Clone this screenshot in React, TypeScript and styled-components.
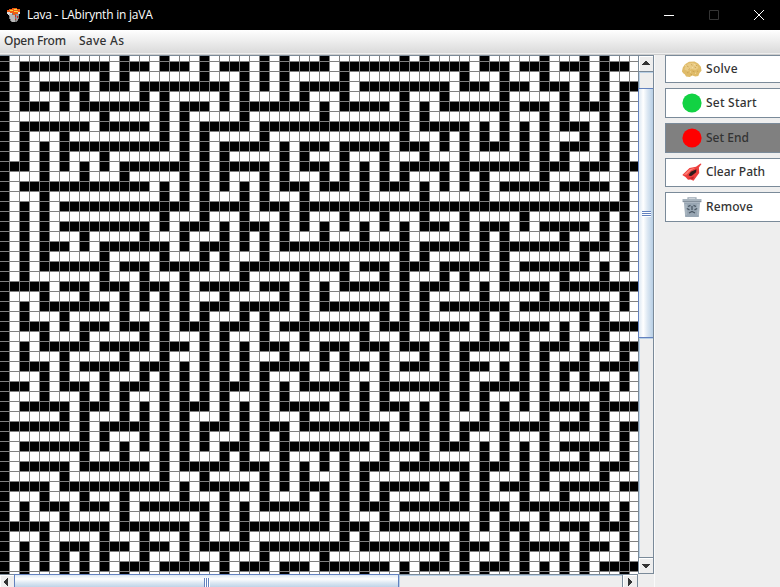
import React from "react";
import styled, { createGlobalStyle, css } from "styled-components";

const GlobalStyle = createGlobalStyle`
  * { box-sizing: border-box; }
  body { margin: 0; background: #eeeeee; overflow: hidden; }
`;

const LINE = "#7a8a99";
const THUMB = "#6382bf";
const FACE = "#eeeeee";

const Window = styled.div`
  width: 780px;
  height: 587px;
  display: flex;
  flex-direction: column;
  overflow: hidden;
  background: ${FACE};
  font-family: "Noto Sans", "Open Sans", sans-serif;
`;

const TitleBar = styled.header`
  flex: none;
  height: 30px;
  display: flex;
  align-items: center;
  padding-left: 6px;
  background: #000;
  color: #fff;
`;

const Title = styled.span`
  flex: 1;
  margin-left: 5px;
  font: 12px/16px "Open Sans", sans-serif;
  letter-spacing: -0.22px;
  white-space: pre;
`;

const WindowButtons = styled.div`
  display: flex;
  margin-right: -2px;
`;

const WindowButton = styled.span<{ $width: number; $dim?: boolean }>`
  width: ${(p) => p.$width}px;
  height: 30px;
  display: flex;
  align-items: center;
  justify-content: center;
  color: ${(p) => (p.$dim ? "#343434" : "#fff")};
`;

const MenuBar = styled.nav`
  flex: none;
  height: 25px;
  display: flex;
  padding-left: 4px;
  gap: 13px;
  background: linear-gradient(#fff, #dadada 23px, #eee 23px, #eee 24px, #ccc 24px);
`;

const MenuItem = styled.span<{ $width: number; $tracking: number }>`
  width: ${(p) => p.$width}px;
  font-size: 12px;
  font-weight: 500;
  line-height: 22px;
  letter-spacing: ${(p) => p.$tracking}px;
  color: #333;
  white-space: pre;
`;

const Content = styled.main`
  flex: 1;
  min-height: 0;
  display: flex;
`;

const ScrollPane = styled.section`
  flex: none;
  width: 654px;
  height: 532px;
  display: grid;
  grid-template-columns: 638px 16px;
  grid-template-rows: 518px 14px;
  border-top: 1px solid ${LINE};
  overflow: hidden;
`;

const Viewport = styled.div`
  overflow: hidden;
  display: flex;
  flex-direction: column;
  background: #fff;
`;

const MazeRow = styled.div<{ $height: number }>`
  flex: none;
  height: ${(p) => p.$height}px;
  width: 640px;
  display: flex;
  border-bottom: 1px solid #808080;
`;

const Cell = styled.i<{ $wall: boolean }>`
  flex: none;
  width: 10px;
  background: ${(p) => (p.$wall ? "#000" : "#fff")};
  border-right: 1px solid #808080;
`;

const VBar = styled.div`
  display: flex;
  flex-direction: column;
  border-left: 1px solid ${LINE};
  border-right: 1px solid ${LINE};
  border-bottom: 1px solid ${LINE};
`;

const HBar = styled.div`
  display: flex;
  height: 14px;
  border-top: 1px solid ${LINE};
  border-right: 1px solid ${LINE};
`;

const Corner = styled.div`
  background: ${FACE};
`;

const arrowBase = css`
  flex: none;
  display: flex;
  align-items: center;
  justify-content: center;
  background: ${FACE};
  box-shadow: inset 1px 1px 0 #fff;
`;

const ArrowUp = styled.div`
  ${arrowBase}
  height: 16px;
  padding-bottom: 1px;
  border-bottom: 1px solid ${LINE};
`;

const ArrowDown = styled.div`
  ${arrowBase}
  height: 16px;
  border-top: 1px solid ${LINE};
`;

const ArrowLeft = styled.div`
  ${arrowBase}
  width: 14px;
  padding-right: 2px;
`;

const ArrowRight = styled.div`
  ${arrowBase}
  width: 15px;
  border-left: 1px solid ${LINE};
`;

const VTrack = styled.div<{ $size?: number }>`
  ${(p) => (p.$size ? `flex: none; height: ${p.$size}px;` : "flex: 1;")}
  background: ${FACE};
  box-shadow: inset 1px 1px 0 #b8cfe5;
`;

const HTrack = styled.div`
  flex: 1;
  background: ${FACE};
  box-shadow: inset 1px 1px 0 #b8cfe5;
`;

const VThumb = styled.div`
  flex: none;
  height: 250px;
  margin-left: -1px;
  padding-top: 2px;
  display: flex;
  flex-direction: column;
  align-items: center;
  justify-content: center;
  border: 1px solid ${THUMB};
  border-right: 0;
  background: linear-gradient(90deg, #dde8f3, #fff 30%, #dde8f3 60%, #b8cfe5);
`;

const HThumb = styled.div`
  flex: none;
  width: 385px;
  height: 15px;
  margin-top: -1px;
  display: flex;
  justify-content: center;
  padding-top: 3px;
  border: 1px solid ${THUMB};
  background: linear-gradient(#dde8f3, #fff 30%, #dde8f3 60%, #b8cfe5);
`;

const VGrip = styled.span`
  width: 9px;
  height: 2px;
  background: linear-gradient(${THUMB} 50%, #fff 50%);
`;

const HGrip = styled.span`
  width: 2px;
  height: 11px;
  background: linear-gradient(90deg, ${THUMB} 50%, #fff 50%);
`;

const Sidebar = styled.aside`
  flex: 1;
  padding-left: 10px;
  display: flex;
  flex-direction: column;
  gap: 5px;
  border-left: 1px solid #fafafa;
`;

const ToolButton = styled.button<{ $height: number; $tracking: number; $active?: boolean }>`
  flex: none;
  width: 125px;
  height: ${(p) => p.$height}px;
  margin: 0;
  padding: 0 0 0 16px;
  display: flex;
  align-items: center;
  gap: 4px;
  border: 1px solid ${LINE};
  border-right: 0;
  background: ${(p) => (p.$active ? "#808080" : "#fff")};
  color: #333;
  font: 500 12px/16px "Noto Sans", sans-serif;
  letter-spacing: ${(p) => p.$tracking}px;
  text-align: left;
  white-space: pre;

  svg { flex: none; }
`;

const ToolLabel = styled.span<{ $raise?: boolean }>`
  padding-bottom: ${(p) => (p.$raise ? 2 : 0)}px;
`;

const MAZE = [
  "0 6 12 16 20 26 28 32 40 42 48 54 58 60",
  "0 2-10 12-14 16-18 20 22-24 26 28-32 34-46 48-50 52-54 56-58 60-62",
  "0 2 10 12 20 24 26 28 34 46 50 54 58 60",
  "0 2 4-8 10-12 14-22 24 26 28 30-34 36-44 46-48 50-52 54-56 58 60 62-63",
  "0 2 6 8 14 16 22 24 28 30 34 40 44 50 56 58 60 62",
  "0 2-4 6 8-14 16 18-20 22 24-30 32 34-38 40 42 44-50 52-54 56 58-60 62",
  "0 10 16 18 24 32 40 42 50 54 56 60 62",
  "0 2-8 10-14 16 18 20-24 26-40 42-46 48 50 52 54 56-58 60 62",
  "0 2 6 16 18 20 26 40 44 46 48 50 52 54 58 60 62",
  "0 2 4 6-16 18 20 22-26 28 30-32 34-38 40-42 44 46 48-50 52 54 56-58 60 62",
  "0 2 4 6 10 18 20 22 28 30 34 38 42 46 52 54 56 60 62",
  "0-2 4 6 8 10 12-18 20 22-26 28 30-32 34 36 38 40-44 46-52 54-56 58-60 62-63",
  "0 4 8 12 18 20 22 26 28 32 34 36 38 40 44 46 48 54 58 62",
  "0 2-14 16 18 20 22 24 26 28-30 32-34 36 38-40 42 44 46 48 50-54 56-60 62",
  "0 4 16 18 20 24 26 30 36 42 48 62",
  "0 2 4 6-18 20-24 26-28 30-62",
  "0 2 4 16 20 24 28 30 34 38 42 46 52 60 62",
  "0 2 4 6-14 16 18-20 22 24-26 28 30 32 34 36 38 40 42-44 46 48-50 52 54-58 60 62",
  "0 2 4 8 14 18 22 24 26 28 32 36 40 46 48 50 56 60 62",
  "0 2 4-6 8 10-16 18 20-22 24 26 28-40 42-46 48 50-56 58-60 62",
  "0 2 4 10 16 20 22 26 40 42 48 50 58 62",
  "0 2 4-10 12-14 16-20 22 24-34 36-38 40-42 44-48 50 52-58 60 62",
  "0 2 10 14 18 24 30 34 38 40 44 46 50 56 60",
  "0-4 6-8 10-12 14-16 18 20-24 26-28 30 32 34-38 40 42-44 46 48 50-54 56-63",
  "0 4 8 12 14 16 18 22 28 30 32 40 42 48 54 62",
  "0 2 4-10 12 14 16 18 20-22 24-28 30 32-38 40 42 44-50 52-60 62",
  "0 2 6 12 16 18 20 24 26 30 38 40 42 48 50 58 60",
  "0 2-4 6 8-10 12-14 16 18-20 22-24 26 28-36 38-40 42-46 48 50-54 56 58 60-63",
  "0 4 8 14 16 20 22 26 30 36 40 44 48 52 56 60",
  "0 2 4-8 10-14 16-18 20 22 24 26-28 30 32-34 36-38 40-42 44 46-50 52 54-56 58-60 62-63",
  "0 2 6 12 16 20 22 24 28 32 34 38 42 44 46 52 54 58 62",
  "0 2-4 6 8-12 14-16 18 20 22 24 26-30 32 34-36 38 40-42 44 46-48 50 52 54 56-58 60-63",
  "0 4 6 10 14 16 18 20 22 24 26 30 34 38 44 46 50 52 54 56 58 62",
  "0-2 4 6-8 10 12-14 16 18 20 22-24 26 28 30-34 36 38-44 46 48-52 54 56 58-60 62",
  "0 4 8 10 12 16 18 20 22 26 28 34 36 38 44 46 48 52 54 60",
  "0 2-6 8-10 12 14 16 18-20 22 24 26 28-32 34 36 38-40 42 44 46 48 50 52 54-58 60-63",
  "0 6 8 12 14 16 18 22 24 26 30 36 40 42 44 48 50 54 58 60",
  "0-6 8 10-14 16 18 20-22 24 26-28 30-38 40 42 44 46-48 50-54 56-58 60 62-63",
  "0 8 10 14 16 18 20 24 26 28 38 42 44 46 50 54 60 62",
  "0 2-8 10 12 14 16 18 20 22-24 26 28-36 38-42 44-46 48 50 52 54 56-60 62",
  "0 8 12 16 18 22 24 28 32 34 38 42 48 50 52 54 58 62",
  "0 2-6 8-14 16 18-22 24-26 28 30 32 34 36-38 40-46 48-50 52 54-58 60-62",
  "0 6 16 20 26 28 30 34 36 46 48 52 54 60",
  "0-4 6-16 18 20-24 26 28 30-32 34 36 38-42 44 46 48 50-52 54 56-60 62-63",
  "0 4 8 12 18 22 26 30 32 34 36 38 44 46 48 52 56",
  "0 2 4-6 8-10 12 14-20 22 24 26-30 32 34 36-38 40-46 48-50 52-60 62",
  "0 2 6 12 20 22 24 32 34 38 48 50 54 60 62",
  "0-4 6-10 12-18 20 22 24-32 34-36 38-46 48 50-52 54 56-58 60-62",
  "0 4 10 14 18 20 24 34 36 46 50 52 58 62",
  "0 2 4 6-8 10-12 14-16 18 20-24 26-34 36-44 46-48 50 52-56 58-60 62",
  "0 2 4 6 8 10 14 18 22 26 32 44 46 50 52 56 58 62",
  "0 2 4 6 8 10 12-14 16-20 22 24-26 28-30 32-38 40 42-44 46 48-50 52 54 56 58 60-63",
  "0 2 6 8 12 22 28 36 40 46 48 52 54 56 58 62",
];

const COLUMNS = Array.from({ length: 64 }, (_, i) => i);

const walls = MAZE.map((line) => {
  const row = COLUMNS.map(() => false);
  line.split(" ").forEach((part) => {
    const [from, to = from] = part.split("-").map(Number);
    row.fill(true, from, to + 1);
  });
  return row;
});

const Maze = () => (
  <Viewport>
    {walls.map((row, y) => (
      <MazeRow key={y} $height={y === 0 ? 6 : 10}>
        {row.map((wall, x) => (
          <Cell key={x} $wall={wall} />
        ))}
      </MazeRow>
    ))}
  </Viewport>
);

const LavaBucket = () => (
  <svg width="16" height="16" viewBox="0 0 16 16" shapeRendering="crispEdges">
    <path d="M2 4h12l-1 7-2 4H5l-2-4z" fill="#777" />
    <path d="M3 6h3v2h3v7H6l-2-4z" fill="#b8b8b8" />
    <path d="M10 7h3l-1 5-2 2z" fill="#999" />
    <path d="M1 3h2V2h3V1h5v1h3v3h-2v2H9v1H7V6H4V5H1z" fill="#ef5b12" />
    <path d="M4 3h3v1H4zM8 2h3v1H8zM8 4h4v1H8z" fill="#ffd43b" />
    <path d="M1 5h3v1h2v1H3v1H2zM12 5h2v2h-2z" fill="#ddd" />
    <path d="M9 8h1v2H9zM11 9h1v2h-1zM9 12h1v1H9z" fill="#d42a1d" />
  </svg>
);

const Dot = ({ fill }: { fill: string }) => (
  <svg width="20" height="20" viewBox="0 0 20 20">
    <circle cx="10" cy="10" r="9.6" fill={fill} />
  </svg>
);

const Nugget = () => (
  <svg width="20" height="20" viewBox="0 0 20 20">
    <path d="M.8 8.5 3 5.2l4-2.4 5.5-.3 3.600 2 2.800 3.200.6 4-2 2.200-1.200 3-3 .6-3-1-2.600 1.600-3.600-.6-1.400-2.200-1.500-1-1.300-2z" fill="#dfbb69" />
    <path d="M3 8l3-3.500 5-.8 3.500 1.500L16.500 9l-3 2-4-1-4 2-3-1.500z" fill="#e9cb85" />
    <path d="m5 7 1.500.8M9 5.500l1.500.7M12.500 8l1.500.8M6.500 10.500l1.500-.8M10.500 12l2 .8M5 14l1.500-.8M14 6l1 1M8.500 15l1.500.7M15 12l1.200.7" stroke="#c59d4e" strokeWidth=".8" />
    <path d="m3 6.500 1-.6M10 8.500l1 .4M12 6l.8-.5M8 12.800l1 .3M13 14.500l1-.5" stroke="#f6e3ac" strokeWidth=".9" />
  </svg>
);

const Eraser = () => (
  <svg width="20" height="20" viewBox="0 0 20 20">
    <path d="M.3 12 7.500 5l6.500-1.200L18.500.5l1 .6-2.600 3.400.3 5.500-5.700 7.700-3-1.200-2.500.2L3.500 14z" fill="#ee3f3d" />
    <path d="M1.500 11.800 8 6l5.500-1.200L9 7.500l-4.500 4.300z" fill="#ff7d73" />
    <path d="m6.500 12.200 2.300-3.400 5.700-2.500-.4 3-4.300 3.400-1.700.2z" fill="#321c1b" />
    <path d="m6.500 15.300 5.500-1.800-1 2.800z" fill="#c1272d" />
  </svg>
);

const TrashCan = () => (
  <svg width="20" height="20" viewBox="0 0 20 20">
    <path d="M6 2V.8h8V2" fill="none" stroke="#9aa7b3" strokeWidth="1.200" />
    <path d="M.5 2h19v3H.5z" fill="#a8b4be" />
    <path d="M.8 4.300h18.400V5.200H.8z" fill="#74828f" />
    <path d="M2 5.200h16L16.800 20H3.200z" fill="#98a6b3" />
    <path d="M3.500 7h1v11h-1zM15.500 7h1v11h-1z" fill="#b4bfc9" />
    <path d="m6 9.500 2.500-1.200M11.500 8.300 14 9.500M4.800 11.500l2.700 1.300M15.200 11.500l-2.700 1.300M10 9v4M7 16l3-1.500 3 1.500" fill="none" stroke="#4a5763" strokeWidth="1.300" />
  </svg>
);

const TOOLS = [
  { label: "Solve", height: 28, tracking: 0.3, icon: <Nugget /> },
  { label: "Set Start", height: 30, tracking: 0.22, icon: <Dot fill="#12d243" /> },
  { label: "Set End", height: 30, tracking: 0, icon: <Dot fill="#ff0000" />, active: true },
  { label: "Clear Path", height: 29, tracking: 0, icon: <Eraser />, raise: true },
  { label: "Remove", height: 30, tracking: 0.15, icon: <TrashCan /> },
];

export default function App() {
  return (
    <Window>
      <GlobalStyle />
      <TitleBar>
        <LavaBucket />
        <Title>Lava - LAbirynth in jaVA</Title>
        <WindowButtons>
          <WindowButton $width={46}>
            <svg width="10" height="10"><path d="M0 5.500h10" stroke="currentColor" /></svg>
          </WindowButton>
          <WindowButton $width={44} $dim>
            <svg width="10" height="10"><path d="M.5.5h9v9h-9z" fill="none" stroke="currentColor" /></svg>
          </WindowButton>
          <WindowButton $width={46}>
            <svg width="10" height="10"><path d="m0 0 10 10M10 0 0 10" stroke="currentColor" /></svg>
          </WindowButton>
        </WindowButtons>
      </TitleBar>
      <MenuBar>
        <MenuItem $width={62} $tracking={-0.28}>Open From</MenuItem>
        <MenuItem $width={48} $tracking={0.25}>Save As</MenuItem>
      </MenuBar>
      <Content>
        <ScrollPane>
          <Maze />
          <VBar>
            <ArrowUp>
              <svg width="8" height="4" shapeRendering="crispEdges"><path d="M3 0h2v1h1v1h1v1h1v1H0V3h1V2h1V1h1z" fill="#333" /></svg>
            </ArrowUp>
            <VTrack $size={16} />
            <VThumb>
              <VGrip /><VGrip /><VGrip />
            </VThumb>
            <VTrack />
            <ArrowDown>
              <svg width="8" height="4" shapeRendering="crispEdges"><path d="M0 0h8v1H7v1H6v1H5v1H3V3H2V2H1V1H0z" fill="#333" /></svg>
            </ArrowDown>
          </VBar>
          <HBar>
            <ArrowLeft>
              <svg width="4" height="8" shapeRendering="crispEdges"><path d="M4 0v8H3V7H2V6H1V5H0V3h1V2h1V1h1V0z" fill="#333" /></svg>
            </ArrowLeft>
            <HThumb>
              <HGrip /><HGrip /><HGrip />
            </HThumb>
            <HTrack />
            <ArrowRight>
              <svg width="4" height="8" shapeRendering="crispEdges"><path d="M0 0h1v1h1v1h1v1h1v2H3v1H2v1H1v1H0z" fill="#333" /></svg>
            </ArrowRight>
          </HBar>
          <Corner />
        </ScrollPane>
        <Sidebar>
          {TOOLS.map((t) => (
            <ToolButton key={t.label} $height={t.height} $tracking={t.tracking} $active={t.active}>
              {t.icon}
              <ToolLabel $raise={t.raise}>{t.label}</ToolLabel>
            </ToolButton>
          ))}
        </Sidebar>
      </Content>
    </Window>
  );
}
